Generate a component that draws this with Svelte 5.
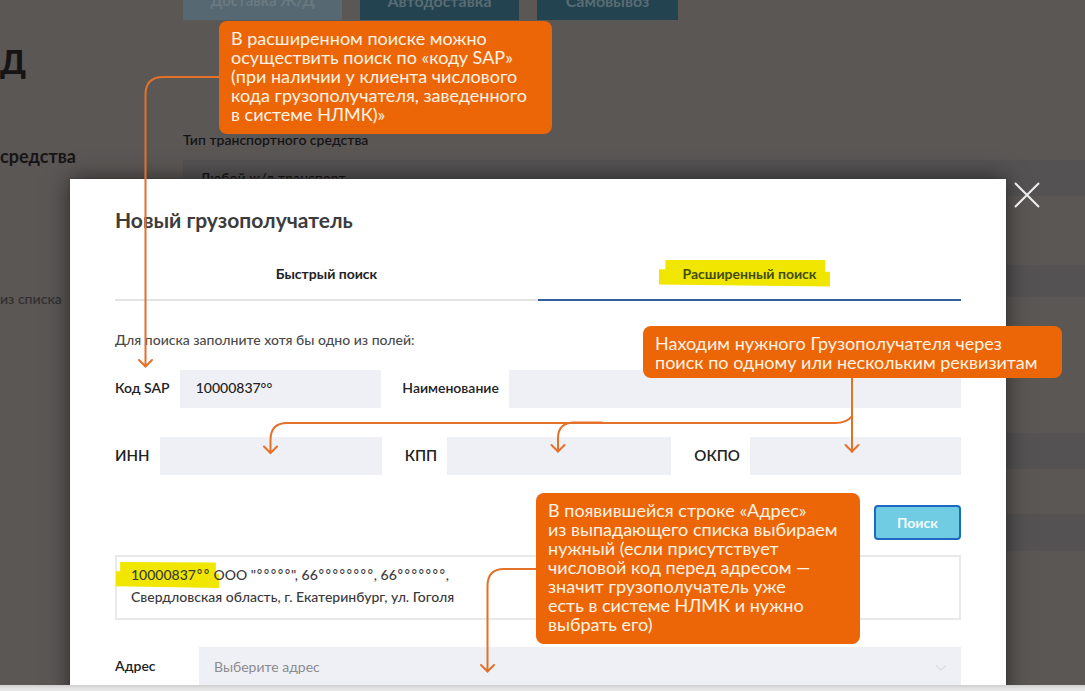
<script lang="ts">
  let sap = $state('10000837°°');
  let name = $state('');
  let inn = $state('');
  let kpp = $state('');
  let okpo = $state('');
  let tab = $state('advanced');

  const deliveries = ['Доставка Ж/Д', 'Автодоставка', 'Самовывоз'];
</script>

<div class="page">
  <div class="screen">
    <div class="backdrop">
      <aside class="side">
        <h1>Д</h1>
        <h2>средства</h2>
        <p>из списка</p>
      </aside>
      <div class="content">
        <div class="deliveries">
          {#each deliveries as item, i}
            <button type="button" class="delivery" class:current={i === 0}>{item}</button>
          {/each}
        </div>
        <span class="caption">Тип транспортного средства</span>
        <div class="band first">Любой ж/д транспорт</div>
        <div class="band second"></div>
        <div class="band third"></div>
        <div class="band fourth"></div>
      </div>
    </div>

    <div class="layer">
      <section class="modal" role="dialog" aria-labelledby="title">
        <h3 id="title">Новый грузополучатель</h3>
        <div class="tabs" role="tablist">
          <button type="button" role="tab" aria-selected={tab === 'quick'} class:active={tab === 'quick'} onclick={() => (tab = 'quick')}>
            <span>Быстрый поиск</span>
          </button>
          <button type="button" role="tab" aria-selected={tab === 'advanced'} class:active={tab === 'advanced'} onclick={() => (tab = 'advanced')}>
            <span class="marked">Расширенный поиск</span>
          </button>
        </div>
        <p class="hint">Для поиска заполните хотя бы одно из полей:</p>
        <div class="row two">
          <div class="field"><label for="sap">Код SAP</label><input id="sap" bind:value={sap} /></div>
          <div class="field"><label for="name">Наименование</label><input id="name" bind:value={name} /></div>
        </div>
        <div class="row three">
          <div class="field"><label for="inn">ИНН</label><input id="inn" bind:value={inn} /></div>
          <div class="field"><label for="kpp">КПП</label><input id="kpp" bind:value={kpp} /></div>
          <div class="field"><label for="okpo">ОКПО</label><input id="okpo" bind:value={okpo} /></div>
        </div>
        <button type="button" class="search">Поиск</button>
        <div class="result">
          <span class="code">10000837<i>°°</i></span> ООО "<i>°°°°°</i>", 66<i>°°°°°°°°</i>, 66<i>°°°°°°°</i>,<br />
          Свердловская область, г. Екатеринбург, ул. Гоголя
        </div>
        <div class="address">
          <label for="address">Адрес</label>
          <div class="picker">
            <select id="address"><option>Выберите адрес</option></select>
            <svg width="12" height="8" viewBox="0 0 12 8" aria-hidden="true"><path d="M1 1.500 6 6l5-4.500" /></svg>
          </div>
        </div>
      </section>
      <button type="button" class="close" aria-label="Закрыть">
        <svg width="26" height="26" viewBox="0 0 26 26" aria-hidden="true"><path d="M1 1 25 25M25 1 1 25" /></svg>
      </button>
    </div>

    <svg class="arrows" width="1085" height="685" viewBox="0 0 1085 685" aria-hidden="true">
      <path d="M220 77H163Q145.500 77 145.500 95V366M139 360 145.500 366.500 152 360" />
      <path d="M852 378V452M845.500 445 852 451.500 858.500 445" />
      <path d="M852 416Q847 423 835 423H287Q270.500 423 270.500 440V453M264 446.500 270.500 453 277 446.500" />
      <path d="M602 422.500H574Q558 423 558 438V451M551.500 445 558 451.500 564.500 445" />
      <path d="M537 569H504Q487.500 569 487.500 586V671M481 665 487.500 671.500 494 665" />
    </svg>

    <div class="note sap-note">В расширенном поиске можно<br />осуществить поиск по «коду SAP»<br />(при наличии у клиента числового<br />кода грузополучателя, заведенного<br />в системе НЛМК)»</div>
    <div class="note fields-note">Находим нужного Грузополучателя через<br />поиск по одному или нескольким реквизитам</div>
    <div class="note address-note">В появившейся строке «Адрес»<br />из выпадающего списка выбираем<br />нужный (если присутствует<br />числовой код перед адресом —<br />значит грузополучатель уже<br />есть в системе НЛМК и нужно<br />выбрать его)</div>
  </div>
  <div class="edge"></div>
</div>

<style>
  :global(body) { margin: 0; }
  .page {
    display: flex;
    flex-direction: column;
    height: 100vh;
    font-family: Lato, "Noto Sans", sans-serif;
    font-size: 14px;
    color: #333;
  }
  .page * { box-sizing: border-box; }
  button, input, select { font: inherit; border: 0; border-radius: 0; padding: 0; margin: 0; }
  h1, h2, h3, p { margin: 0; }
  .screen {
    position: relative;
    flex: 1;
    min-height: 0;
    display: grid;
    grid-template: minmax(0, 1fr) / minmax(0, 1fr);
    overflow: hidden;
    background: #5b5755;
  }
  .backdrop, .layer { grid-area: 1 / 1; min-width: 0; min-height: 0; }
  .backdrop { display: grid; grid-template-columns: 183px 1fr; color: #171415; }
  .side h1 { margin-top: 42px; font-size: 32px; line-height: 40px; font-weight: 900; }
  .side h2 { margin-top: 63px; font-size: 18px; line-height: 22px; font-weight: 700; }
  .side p { margin-top: 122px; line-height: 20px; color: #343131; font-weight: 600; }
  .content { display: flex; flex-direction: column; }
  .deliveries { display: flex; gap: 18px; margin-top: -20px; }
  .delivery { width: 159px; height: 40px; background: #22434f; color: #596c73; font-weight: 700; font-size: 16px; }
  .delivery:last-child { width: 141px; }
  .delivery.current { background: #566871; color: #6b7a80; font-size: 15px; }
  .caption { margin-top: 110px; line-height: 20px; font-weight: 600; }
  .band { background: #545253; }
  .first { margin-top: 10px; height: 36px; padding: 8px 17px; line-height: 20px; font-weight: 600; }
  .second { margin-top: 69px; height: 32px; }
  .third { margin-top: 136px; height: 36px; }
  .fourth { margin-top: 45px; height: 37px; }
  .layer { display: flex; align-items: flex-start; padding: 179px 43px 0 70px; gap: 6px; }
  .modal {
    flex: 1;
    min-width: 0;
    display: flex;
    flex-direction: column;
    min-height: 540px;
    padding: 27px 45px 0;
    background: #fff;
    box-shadow: 0 0 22px rgba(0, 0, 0, 0.55), 0 0 1px 1px rgba(80, 80, 80, 0.6);
  }
  .close { flex: none; width: 30px; height: 30px; padding: 3px 2px; background: none; }
  .close svg { display: block; fill: none; stroke: #eee; stroke-width: 2; }
  h3 { font-size: 21px; line-height: 28px; font-weight: 700; color: #3c3c3c; }
  .tabs { display: grid; grid-template-columns: 1fr 1fr; margin-top: 20px; }
  .tabs button {
    height: 47px;
    padding-bottom: 7px;
    background: none;
    border-bottom: 2px solid #e3e3e3;
    color: #222;
    font-weight: 700;
  }
  .tabs button.active { border-color: #355e9d; }
  .tabs .marked { position: relative; z-index: 0; color: #424d0d; }
  .marked::before, .code::before {
    content: "";
    position: absolute;
    z-index: -1;
    inset: -5px -14px -5px -24px;
    background: #f1e600;
    clip-path: polygon(4% 0, 97% 2%, 97% 45%, 100% 45%, 100% 100%, 0 93%, 0 36%, 4% 36%);
  }
  .hint { margin-top: 28px; line-height: 22px; font-weight: 500; color: #4a4a4a; }
  .row { display: grid; }
  .two { grid-template-columns: minmax(0, 267fr) minmax(0, 560fr); column-gap: 21px; margin-top: 19px; }
  .three { grid-template-columns: repeat(3, minmax(0, 1fr)); column-gap: 23px; margin-top: 29px; }
  .field { display: flex; align-items: center; gap: 10px; color: #222; }
  label { font-weight: 600; white-space: nowrap; padding-bottom: 3px; }
  .three label { font-size: 15px; }
  .field input { flex: 1; min-width: 0; height: 38px; padding: 0 16px 3px; background: #eff0f5; color: #222; font-weight: 500; }
  .search {
    align-self: flex-end;
    width: 87px;
    height: 35px;
    margin-top: 30px;
    border: 2px solid #1c68c2;
    border-radius: 4px;
    background: #70cce2;
    color: #f4fcff;
    font-weight: 700;
  }
  .result {
    position: relative;
    z-index: 0;
    min-height: 65px;
    margin-top: 15px;
    padding: 7px 14px;
    border: 2px solid #e9e9eb;
    line-height: 22px;
    font-weight: 500;
    color: #3a3a3a;
  }
  .result i { font-family: "DejaVu Sans", sans-serif; font-style: normal; line-height: 1; }
  .code { position: relative; }
  .code::before { inset: -4px -9px -5px -15px; }
  .address { display: flex; align-items: center; margin-top: 27px; color: #222; }
  .address label { width: 84px; }
  .picker { position: relative; flex: 1; }
  select { display: block; width: 100%; height: 40px; padding: 0 15px 2px; appearance: none; background: #eff0f5; color: #8b8b8f; }
  .picker svg { position: absolute; right: 14px; top: 17px; fill: none; stroke: #d2d3d8; stroke-width: 1; }
  .arrows { position: absolute; left: 0; top: 0; fill: none; stroke: #e4712a; stroke-width: 2; stroke-linecap: round; pointer-events: none; }
  .note {
    position: absolute;
    padding: 8px 12px;
    border-radius: 8px;
    background: #ec6608;
    color: #fff3e4;
    font-size: 18px;
    line-height: 19px;
    white-space: nowrap;
  }
  .sap-note { left: 219px; top: 21px; width: 333px; height: 113px; }
  .fields-note { left: 643px; top: 326px; width: 419px; height: 52px; }
  .address-note { left: 536px; top: 493px; width: 324px; height: 151px; }
  .edge { height: 6px; background: linear-gradient(#cfcfcf, #e6e6e6 4px); }
</style>
